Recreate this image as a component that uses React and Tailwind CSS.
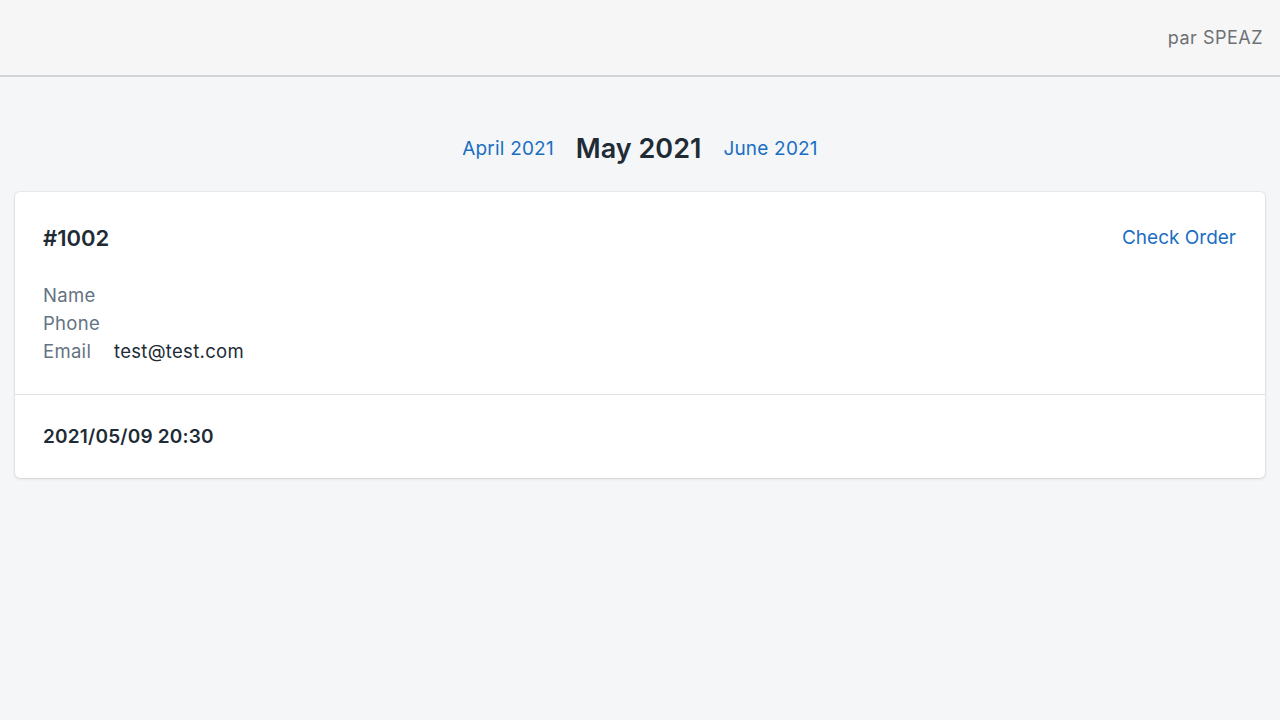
export default function App() {
  return (
    <div className="min-h-[720px] bg-[#f4f6f8]" style={{ fontFamily: "Inter, 'Noto Sans', sans-serif" }}>
      <div className="h-[77px] bg-[#f6f6f7] border-b-2 border-[#d2d5d8] flex items-center justify-end pr-[17px]">
        <span className="text-[18px] tracking-[0.5px] text-[#6d7175]">par SPEAZ</span>
      </div>
      <div className="pt-[52px] flex items-center justify-center h-[40px] box-content">
        <a className="text-[19px] tracking-[0.2px] text-[#1b6ec2]">April 2021</a>
        <span className="mx-[22px] text-[27px] font-semibold text-[#212b36]">May 2021</span>
        <a className="text-[19px] tracking-[0.2px] text-[#1b6ec2]">June 2021</a>
      </div>
      <div className="mt-[23px] mx-[15px] bg-white rounded-[5px] shadow-[0_0_0_1px_rgba(63,63,68,0.05),0_1px_3px_0_rgba(63,63,68,0.15)]">
        <div className="px-[28px] pt-[32px] pb-[29px] border-b border-[#dfe3e8]">
          <div className="flex items-center justify-between h-[28px]">
            <span className="text-[22px] font-semibold text-[#212b36]">#1002</span>
            <a className="text-[19px] text-[#1b6ec2] mr-px">Check Order</a>
          </div>
          <div className="mt-[29px] text-[18.5px] tracking-[0.3px] leading-[28px]">
            <div className="flex"><span className="w-[71px] text-[#637381]">Name</span></div>
            <div className="flex"><span className="w-[71px] text-[#637381]">Phone</span></div>
            <div className="flex"><span className="w-[71px] text-[#637381]">Email</span><span className="text-[#212b36]">test@test.com</span></div>
          </div>
        </div>
        <div className="px-[28px] pt-[28px] pb-[27px]">
          <div className="h-[28px] flex items-center text-[19px] tracking-[0.2px] font-semibold text-[#212b36]">2021/05/09 20:30</div>
        </div>
      </div>
    </div>
  );
}
